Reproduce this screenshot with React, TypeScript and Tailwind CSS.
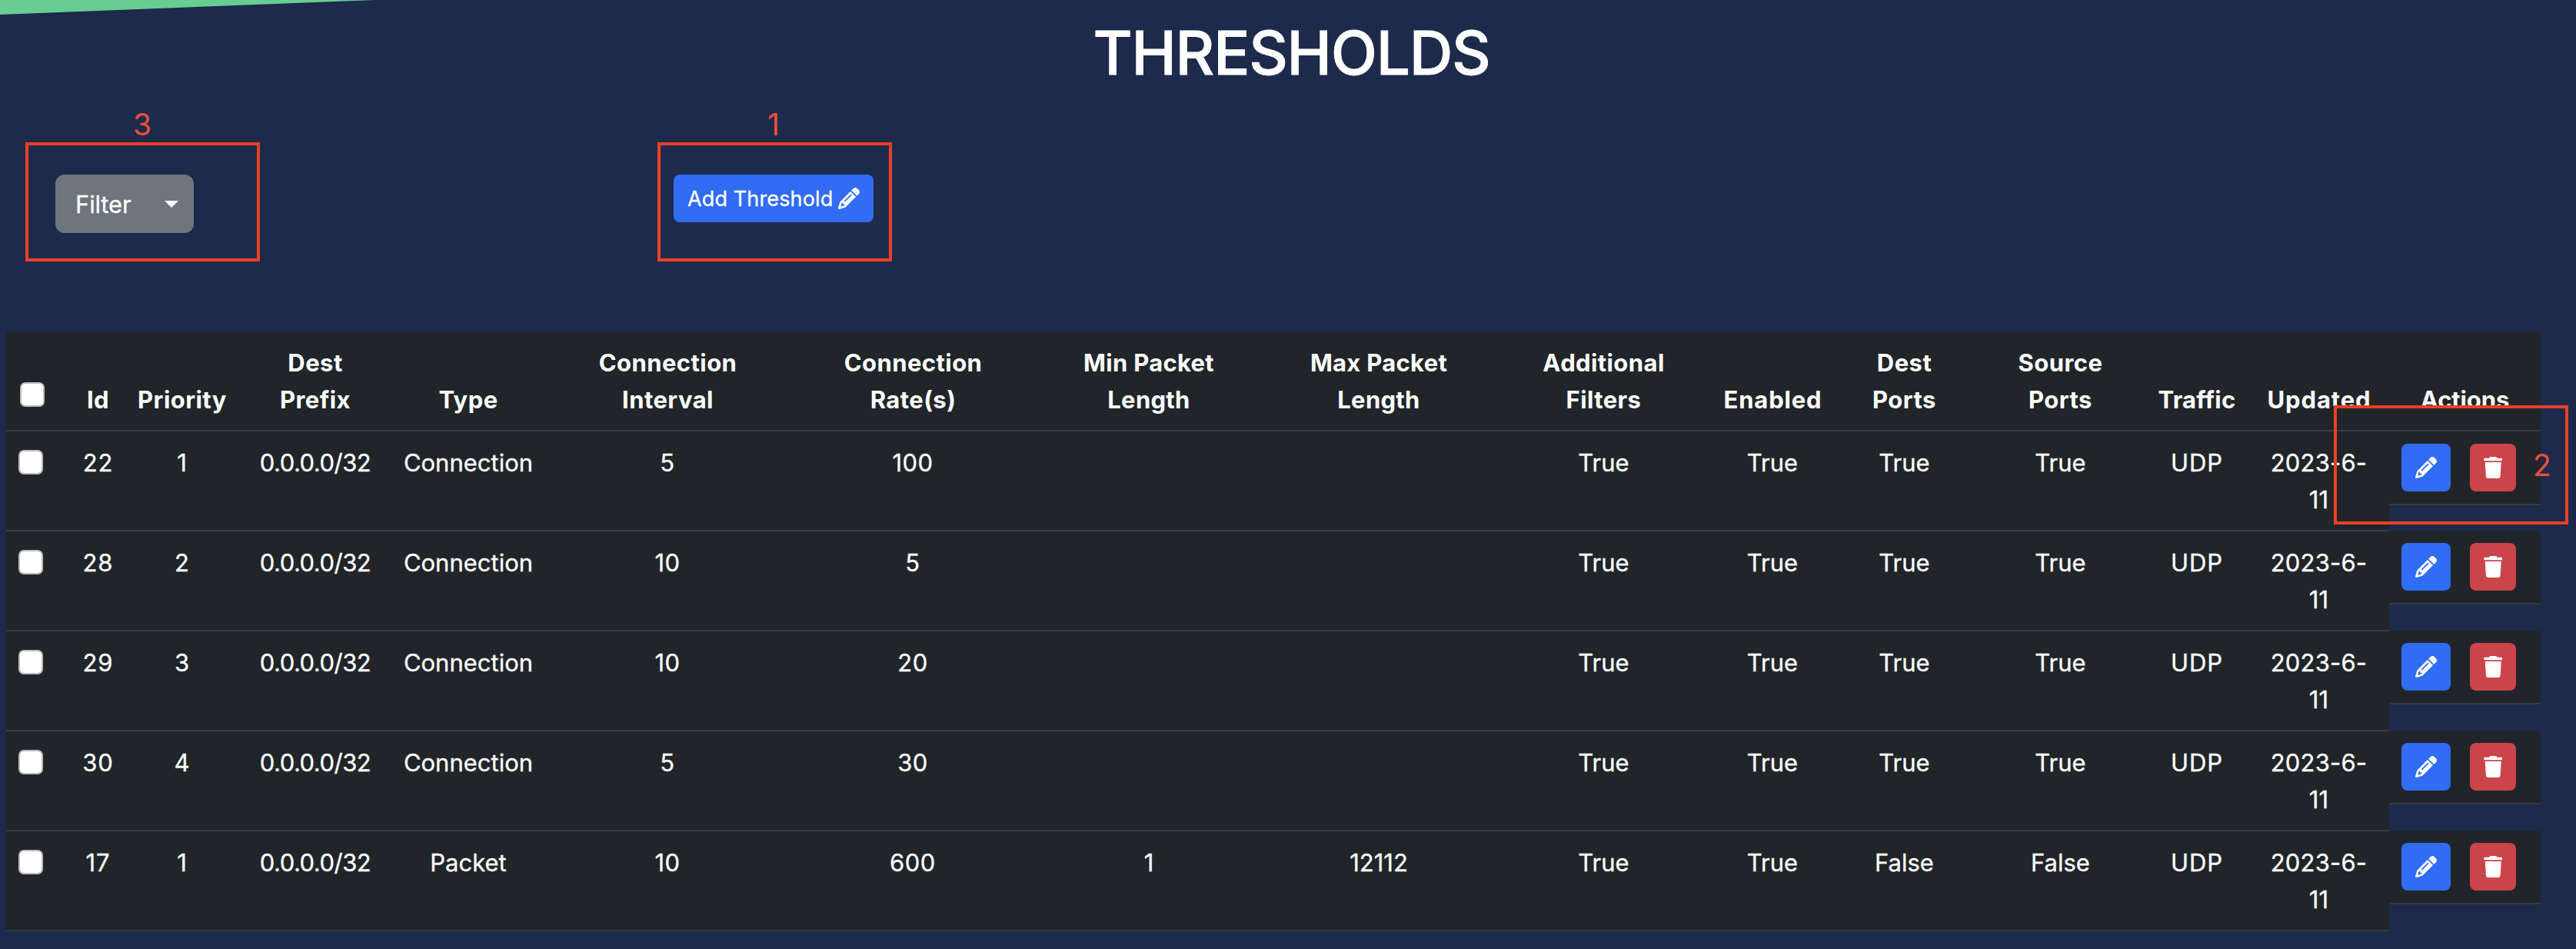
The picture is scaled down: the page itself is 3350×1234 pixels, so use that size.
import React from "react";
import { FaPencil, FaTrash } from "react-icons/fa6";

type Threshold = {
  id: string;
  priority: string;
  prefix: string;
  type: string;
  interval: string;
  rate: string;
  minLength: string;
  maxLength: string;
  filters: string;
  enabled: string;
  destPorts: string;
  sourcePorts: string;
  traffic: string;
  updated: string[];
};

const base = {
  prefix: "0.0.0.0/32",
  filters: "True",
  enabled: "True",
  traffic: "UDP",
  updated: ["2023-6-", "11"],
};

const thresholds: Threshold[] = [
  { ...base, id: "22", priority: "1", type: "Connection", interval: "5", rate: "100", minLength: "", maxLength: "", destPorts: "True", sourcePorts: "True" },
  { ...base, id: "28", priority: "2", type: "Connection", interval: "10", rate: "5", minLength: "", maxLength: "", destPorts: "True", sourcePorts: "True" },
  { ...base, id: "29", priority: "3", type: "Connection", interval: "10", rate: "20", minLength: "", maxLength: "", destPorts: "True", sourcePorts: "True" },
  { ...base, id: "30", priority: "4", type: "Connection", interval: "5", rate: "30", minLength: "", maxLength: "", destPorts: "True", sourcePorts: "True" },
  { ...base, id: "17", priority: "1", type: "Packet", interval: "10", rate: "600", minLength: "1", maxLength: "12112", destPorts: "False", sourcePorts: "False" },
];

const headers: { lines: string[]; tracking: string }[] = [
  { lines: ["Id"], tracking: "tracking-[0.45px]" },
  { lines: ["Priority"], tracking: "pl-px tracking-[0.45px]" },
  { lines: ["Dest", "Prefix"], tracking: "tracking-[0.45px]" },
  { lines: ["Type"], tracking: "tracking-[0.45px]" },
  { lines: ["Connection", "Interval"], tracking: "pl-px tracking-[0.44px]" },
  { lines: ["Connection", "Rate(s)"], tracking: "pl-px tracking-[0.44px]" },
  { lines: ["Min Packet", "Length"], tracking: "tracking-[0.3px]" },
  { lines: ["Max Packet", "Length"], tracking: "tracking-[0.3px]" },
  { lines: ["Additional", "Filters"], tracking: "tracking-[0.4px]" },
  { lines: ["Enabled"], tracking: "pl-px tracking-[0.83px]" },
  { lines: ["Dest", "Ports"], tracking: "tracking-[0.45px]" },
  { lines: ["Source", "Ports"], tracking: "tracking-[0.45px]" },
  { lines: ["Traffic"], tracking: "tracking-[0.2px]" },
  { lines: ["Updated"], tracking: "pl-px tracking-[0.9px]" },
  { lines: ["Actions"], tracking: "tracking-[-0.12px]" },
];

const rowGrid =
  "grid grid-cols-[85px_69px_149px_198px_200px_318px_320px_294px_304px_281px_158px_185px_221px_134px_183px_197px]";

function Checkbox() {
  return (
    <button
      type="button"
      role="checkbox"
      aria-checked="false"
      aria-label="Select row"
      className="block size-8 rounded-[7px] border-2 border-[#bcbdbe] bg-white"
    />
  );
}

function Cell({ lines, className = "" }: { lines: string[]; className?: string }) {
  return (
    <div className={`border-b-2 border-[#373b3e] bg-[#212529] pt-[17px] text-center ${className}`}>
      {lines.map((line, i) => (
        <div key={i} className="whitespace-nowrap">
          {line}
        </div>
      ))}
    </div>
  );
}

function ThresholdRow({ row, first }: { row: Threshold; first: boolean }) {
  return (
    <div className={`${rowGrid} h-[130px] [-webkit-text-stroke:0.3px]`}>
      <div className="border-b-2 border-[#373b3e] bg-[#212529] pt-6 pl-4">
        <Checkbox />
      </div>
      <Cell lines={[row.id]} className="tracking-[0.9px]" />
      <Cell lines={[row.priority]} />
      <Cell lines={[row.prefix]} className="tracking-[-0.51px]" />
      <Cell lines={[row.type]} />
      <Cell lines={[row.interval]} className="tracking-[0.5px]" />
      <Cell lines={[row.rate]} className="tracking-[0.5px]" />
      <Cell lines={[row.minLength]} />
      <Cell lines={[row.maxLength]} />
      <Cell lines={[row.filters]} />
      <Cell lines={[row.enabled]} />
      <Cell lines={[row.destPorts]} />
      <Cell lines={[row.sourcePorts]} />
      <Cell lines={[row.traffic]} className="tracking-[0.9px]" />
      <Cell lines={row.updated} className="tracking-[0.17px]" />
      <div
        className={`flex items-start gap-[25px] self-start border-b-2 border-[#373b3e] bg-[#212529] pt-4 pb-4 pl-4 ${
          first ? "" : "-mt-px"
        }`}
      >
        <button type="button" aria-label="Edit" className="flex h-[62px] w-16 items-center justify-center rounded-lg bg-[#306cf4]">
          <FaPencil className="size-7" />
        </button>
        <button type="button" aria-label="Delete" className="flex h-[62px] w-[60px] items-center justify-center rounded-lg bg-[#ca444a]">
          <FaTrash className="h-7 w-[24.5px]" />
        </button>
      </div>
    </div>
  );
}

export default function App() {
  return (
    <div className="relative h-[1234px] w-[3350px] overflow-hidden bg-[#1d2a4b] font-['Inter',sans-serif] text-[31px] leading-[48px] text-white">
      <svg className="absolute top-0 left-0" width="487" height="20" viewBox="0 0 487 20" aria-hidden="true">
        <path d="M0 0H487L0 19Z" fill="#67cd92" />
      </svg>

      <h1 className="pt-[21px] pl-[9px] text-center text-[78.5px] leading-[96px] font-medium tracking-[-1.3px] [-webkit-text-stroke:0.8px]">
        THRESHOLDS
      </h1>

      <div className="flex h-[314px] items-start pt-[110px] pl-[72px]">
        <button
          type="button"
          className="flex h-[76px] w-[180px] items-center justify-between rounded-xl bg-[#6e757c] pr-5 pl-[26px] tracking-[-0.14px] [-webkit-text-stroke:0.3px]"
        >
          <span className="pt-0.5">Filter</span>
          <svg width="18" height="9" viewBox="0 0 18 9" aria-hidden="true">
            <path d="M0 0H18L9 9Z" fill="currentColor" />
          </svg>
        </button>
        <button
          type="button"
          className="ml-[624px] flex h-[62px] w-[260px] items-center justify-between rounded-lg bg-[#306cf4] pr-[18px] pl-[18px] text-[27px] leading-[42px] tracking-[0.13px] whitespace-nowrap [-webkit-text-stroke:0.3px]"
        >
          <span className="pt-0.5">Add Threshold</span>
          <FaPencil className="size-7" />
        </button>
      </div>

      <div className="ml-2 w-[3296px]">
        <div className={`${rowGrid} h-[130px] border-b-2 border-[#373b3e] bg-[#212529] font-bold`}>
          <div className="pt-[66px] pl-[18px]">
            <Checkbox />
          </div>
          {headers.map((h, i) => (
            <div key={i} className={`flex flex-col justify-end pb-[15px] text-center ${h.tracking}`}>
              {h.lines.map((line) => (
                <div key={line} className="whitespace-nowrap">
                  {line}
                </div>
              ))}
            </div>
          ))}
        </div>
        {thresholds.map((row, i) => (
          <ThresholdRow key={row.id} row={row} first={i === 0} />
        ))}
      </div>

      {/* Numbered callouts over the page */}
      <div className="absolute top-[185px] left-[33px] h-[155px] w-[305px] border-4 border-[#eb4026]" />
      <div className="absolute top-[138px] left-[173px] w-6 text-center text-[39px] text-[#eb4e3d]">3</div>
      <div className="absolute top-[185px] left-[855px] h-[155px] w-[305px] border-4 border-[#eb4026]" />
      <div className="absolute top-[138px] left-[994px] w-6 text-center text-[39px] text-[#eb4e3d]">1</div>
      <div className="absolute top-[527px] left-[3035px] h-[155px] w-[305px] border-4 border-[#eb4026]" />
      <div className="absolute top-[581px] left-[3294px] w-6 text-center text-[39px] text-[#eb4e3d]">2</div>
    </div>
  );
}
